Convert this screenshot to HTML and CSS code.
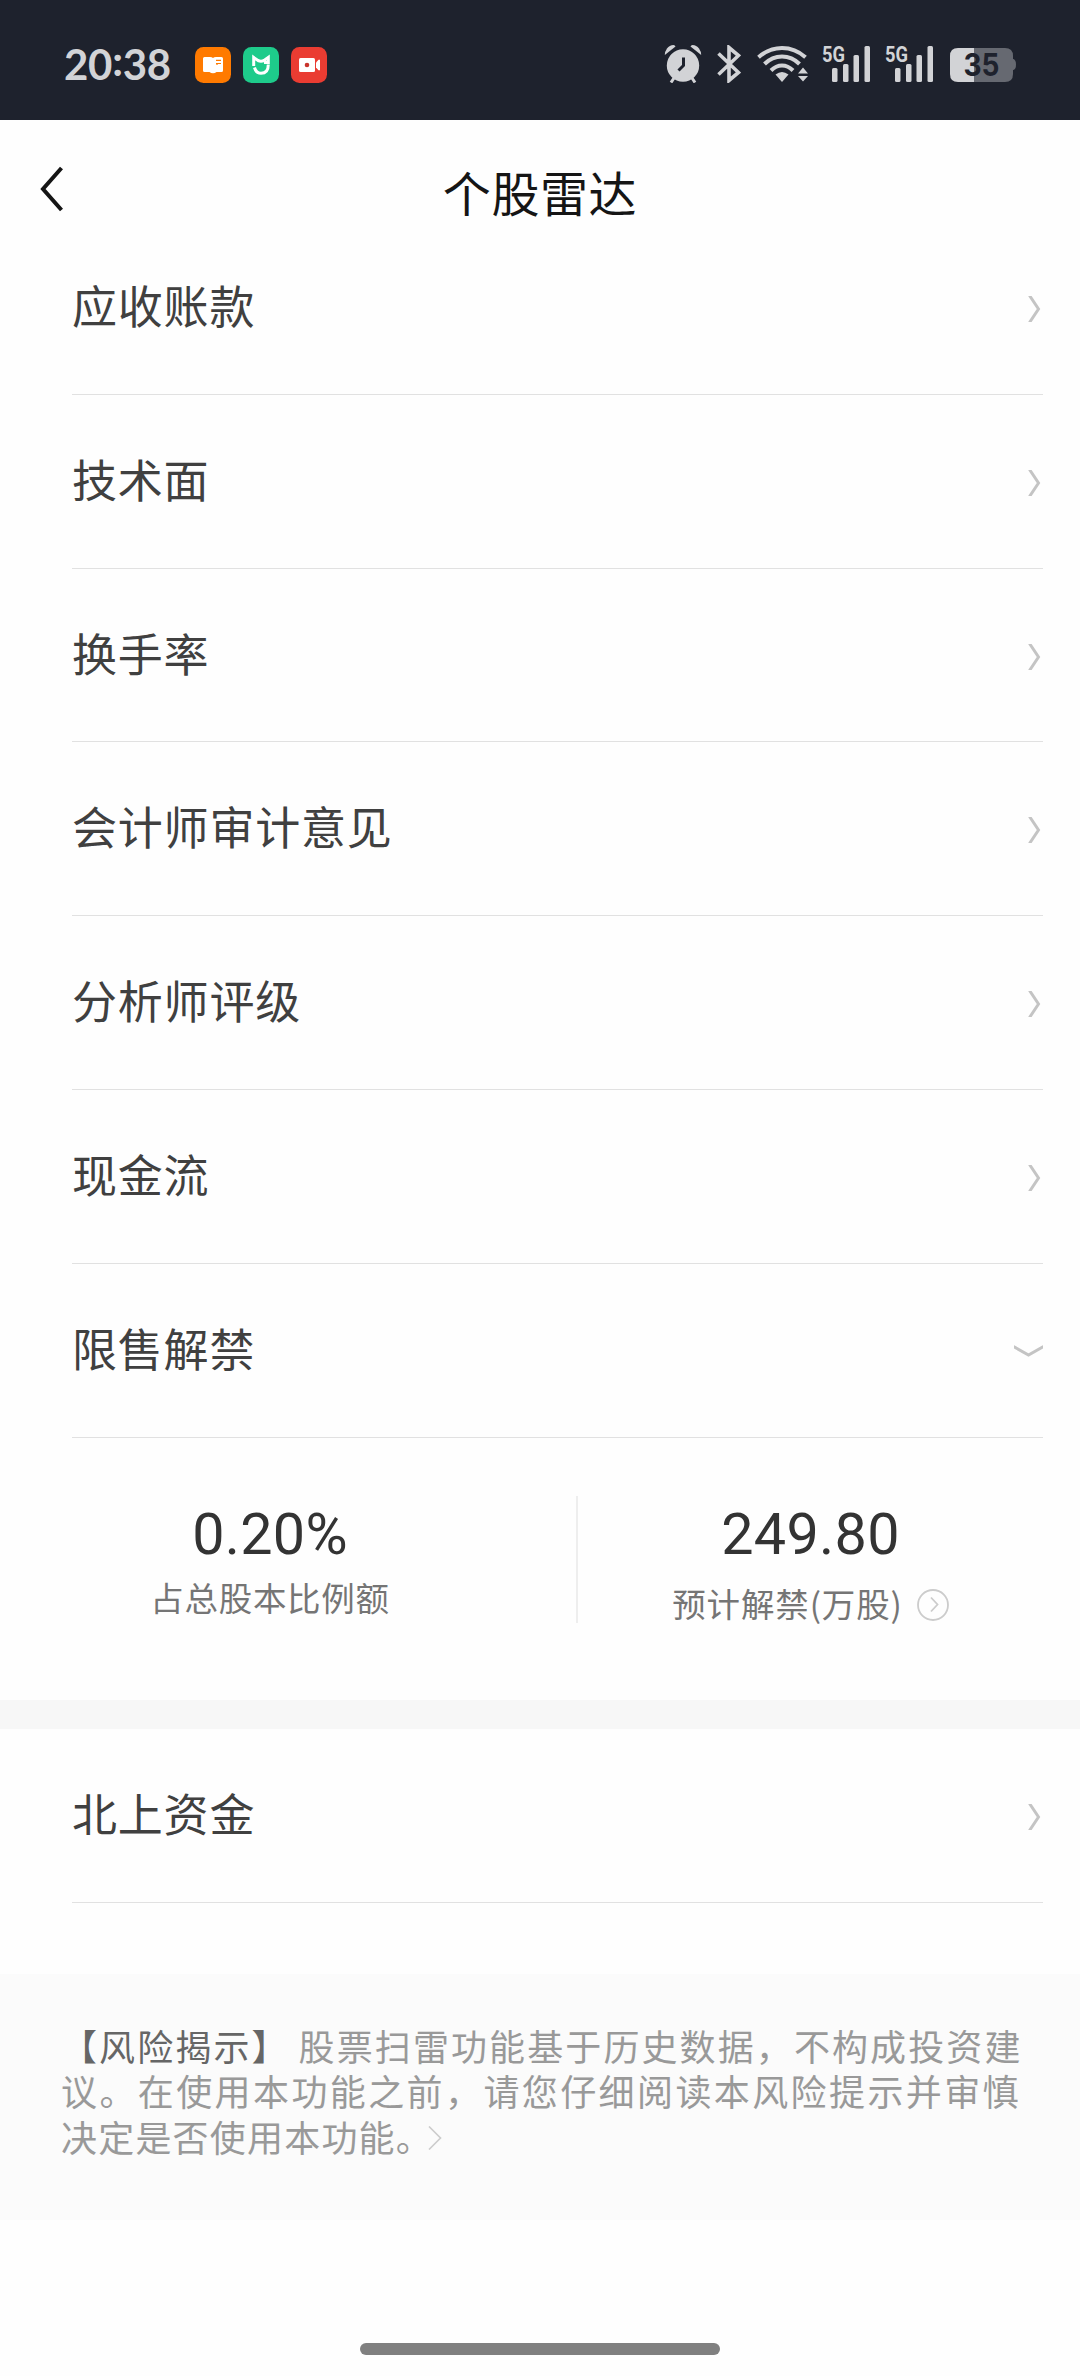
FILE: index.html
```html
<!DOCTYPE html>
<html lang="zh-CN">
<head>
<meta charset="utf-8">
<title>个股雷达</title>
<link rel="stylesheet" href="styles.css">
</head>
<body>
<div class="status">
  <div class="time">20<span class="colon">:</span>38</div>
  <div class="apps">
    <svg width="36" height="36" viewBox="0 0 36 36"><rect width="36" height="36" rx="8.5" fill="#ff7a00"/><path d="M8 11.5Q8 10 9.5 10H15Q17 10 18 11Q19 10 21 10H26.500Q28 10 28 11.500V23.500Q28 25 26.500 25H21.500Q20 26.200 18 26.200T14.500 25H9.500Q8 25 8 23.500Z" fill="#fff"/><path d="M21 13.300h5M21 16.500h5M22 16.500v1.500" stroke="#ff7a00" stroke-width="1.200"/></svg>
    <svg width="36" height="36" viewBox="0 0 36 36"><rect width="36" height="36" rx="8.500" fill="#1ecb8b"/><path d="M10.700 19V10.500L15 13.500Q18 14.800 21 13.500L25.300 10.500V15.500H21M11.500 20.500Q13 26.300 18 26.300Q25.300 26.300 25.300 17.500" fill="none" stroke="#fff" stroke-width="3"/></svg>
    <svg width="36" height="36" viewBox="0 0 36 36"><rect width="36" height="36" rx="8.500" fill="#ea3c32"/><rect x="8" y="11" width="16" height="14" rx="1.500" fill="#fff"/><circle cx="16" cy="18" r="2.300" fill="#c9352c"/><path d="M25 15.500L27.500 12.800H29V23.200H27.500L25 20.500Z" fill="#fff"/></svg>
  </div>
  <div class="indicators">
    <svg width="38" height="38" viewBox="0 0 38 38"><g fill="#d2d3d6"><path d="M.8 10Q.5 7 3 3.500T9.500 0Q11 .2 11.500 1.500Z"/><path d="M37.200 10Q37.500 7 35 3.500T28.500 0Q27 .2 26.500 1.500Z"/><circle cx="19" cy="20.500" r="16.200"/></g><path d="M10 33L7 37.500M28 33L31 37.500" stroke="#d2d3d6" stroke-width="3"/><path d="M19.500 12.500V20.500L14.500 25.500" fill="none" stroke="#1e222d" stroke-width="3"/></svg>
    <svg class="bt" width="24" height="38" viewBox="0 0 24 38"><path d="M1.500 8.500L21.500 27.500L12 35.500V2.500L21.500 10.500L1.500 29.500" fill="none" stroke="#d2d3d6" stroke-width="3.600"/></svg>
    <svg class="wifi" width="52" height="38" viewBox="0 0 52 38"><g fill="none" stroke="#d2d3d6" stroke-width="4"><path d="M1.500 12.200Q12 3 25 3T48.500 12.200"/><path d="M7.500 19Q15 11.500 25 11.500T42.500 19"/><path d="M14 25.500Q19 20.500 25 20.500T36 25.500"/></g><path d="M18.500 29.500Q25 24.500 31.500 29.500L25 37Z" fill="#d2d3d6"/><path d="M46 22.500L51 28.500H41ZM46 36.500L51 31H41Z" fill="#d2d3d6"/></svg>
    <svg class="cell" width="49" height="38" viewBox="0 0 49 38"><text x="0" y="16.500" class="net" textLength="23" lengthAdjust="spacingAndGlyphs">5G</text><g fill="#d2d3d6"><rect x="10" y="23" width="5.500" height="14" rx="1.500"/><rect x="21" y="19" width="5.500" height="18" rx="1.500"/><rect x="31.500" y="10" width="5.500" height="27" rx="1.500"/><rect x="42.500" y="1" width="5.500" height="36" rx="1.500"/></g></svg>
    <svg class="cell2" width="49" height="38" viewBox="0 0 49 38"><text x="0" y="16.500" class="net" textLength="23" lengthAdjust="spacingAndGlyphs">5G</text><g fill="#d2d3d6"><rect x="10" y="23" width="5.500" height="14" rx="1.500"/><rect x="21" y="19" width="5.500" height="18" rx="1.500"/><rect x="31.500" y="10" width="5.500" height="27" rx="1.500"/><rect x="42.500" y="1" width="5.500" height="36" rx="1.500"/></g></svg>
    <svg class="battery" width="66" height="38" viewBox="0 0 66 38"><path d="M62 14h1.500Q66 15 66 19.500T63.500 25H62Z" fill="#666971"/><path d="M24 3H55Q63 3 63 11V29Q63 37 55 37H24Z" fill="#666971"/><path d="M24 3H8Q0 3 0 11V29Q0 37 8 37H24Z" fill="#d2d3d6"/><text x="13.500" y="31" class="level" textLength="36" lengthAdjust="spacingAndGlyphs">35</text></svg>
  </div>
</div>
<header class="header">
  <svg class="back" width="24" height="48" viewBox="0 0 24 48"><path d="M21.500 3L3 24L21.500 45" fill="none" stroke="#151515" stroke-width="4"/></svg>
  <h1 class="title">个股雷达</h1>
</header>
<main>
  <ul class="list">
    <li class="row"><span class="label">应收账款</span><svg class="chev" width="15" height="26" viewBox="0 0 15 26"><path d="M1.500 -.5L10.500 13L1.500 26.500"/></svg></li>
    <li class="row"><span class="label">技术面</span><svg class="chev" width="15" height="26" viewBox="0 0 15 26"><path d="M1.500 -.5L10.500 13L1.500 26.500"/></svg></li>
    <li class="row"><span class="label">换手率</span><svg class="chev" width="15" height="26" viewBox="0 0 15 26"><path d="M1.500 -.5L10.500 13L1.500 26.500"/></svg></li>
    <li class="row"><span class="label">会计师审计意见</span><svg class="chev" width="15" height="26" viewBox="0 0 15 26"><path d="M1.500 -.5L10.500 13L1.500 26.500"/></svg></li>
    <li class="row"><span class="label">分析师评级</span><svg class="chev" width="15" height="26" viewBox="0 0 15 26"><path d="M1.500 -.5L10.500 13L1.500 26.500"/></svg></li>
    <li class="row"><span class="label">现金流</span><svg class="chev" width="15" height="26" viewBox="0 0 15 26"><path d="M1.500 -.5L10.500 13L1.500 26.500"/></svg></li>
    <li class="row"><span class="label">限售解禁</span><svg class="chev" width="29" height="13" viewBox="0 0 29 13"><path d="M-.5 1.500L14.500 10L29.500 1.500"/></svg></li>
  </ul>
  <section class="stats">
    <div class="stat"><div class="value">0.20%</div><div class="caption">占总股本比例额</div></div>
    <div class="divider"></div>
    <div class="stat"><div class="value">249.80</div><div class="caption with-icon"><span>预计解禁(万股)</span><svg class="more" width="32" height="32" viewBox="0 0 32 32" fill="none" stroke="#ccc" stroke-width="1.800"><circle cx="16" cy="16" r="15"/><path d="M14 8.500L20.500 15.500L14 22.500"/></svg></div></div>
  </section>
  <div class="band"></div>
  <ul class="list">
    <li class="row"><span class="label">北上资金</span><svg class="chev" width="15" height="26" viewBox="0 0 15 26"><path d="M1.500 -.5L10.500 13L1.500 26.500"/></svg></li>
  </ul>
</main>
<footer class="notice">
  <p class="line"><span class="strong">【风险揭示】</span><span>股票扫雷功能基于历史数据，不构成投资建</span></p>
  <p class="line second">议。在使用本功能之前，请您仔细阅读本风险提示并审慎</p>
  <p class="line third"><span>决定是否使用本功能。</span><svg class="next" width="14" height="24" viewBox="0 0 14 24"><path d="M1 .5L12.500 12L1 23.500" fill="none" stroke="#ccc" stroke-width="1.600"/></svg></p>
</footer>
<div class="home-bar"></div>
</body>
</html>
```
FILE: styles.css
```css
* { box-sizing: border-box; margin: 0; padding: 0; }
html { background: #fefefe; }
body {
  width: 1080px;
  height: 2376px;
  overflow: hidden;
  display: flex;
  flex-direction: column;
  background: #fefefe;
  font-family: "Noto Sans CJK SC", sans-serif;
  color: #404040;
}
svg { display: block; flex: none; }
.status {
  height: 120px;
  flex: none;
  background: #1e222d;
  display: flex;
  align-items: center;
  padding: 8px 64px 0;
}
.time {
  width: 131px;
  font: 700 42px/50px Lato, sans-serif;
  letter-spacing: -0.3px;
  color: #d2d3d6;
}
.colon { vertical-align: 4px; line-height: 1; }
.apps { display: flex; gap: 12px; padding-top: 2px; }
.indicators { display: flex; margin-left: auto; }
.bt { margin-left: 15px; }
.wifi { margin-left: 16px; }
.cell { margin-left: 13px; overflow: visible; }
.cell2 { margin-left: 14px; overflow: visible; }
.battery { margin-left: 16px; }
.net { font: 700 22px Roboto, sans-serif; fill: #d2d3d6; }
.level { font: 700 31px Inter, sans-serif; fill: #1e222d; }
.header {
  height: 101px;
  flex: none;
  display: grid;
  grid-template-columns: 40px 1fr 40px;
  padding-top: 44px;
}
.back { margin: 1px 0 0 40px; }
.title {
  text-align: center;
  font-size: 48px;
  font-weight: 400;
  line-height: 54px;
  letter-spacing: 0.6px;
  color: #151515;
}
.list { list-style: none; padding: 0 37px 0 72px; }
.row {
  height: 173.83px;
  display: flex;
  align-items: center;
  justify-content: space-between;
  border-bottom: 1px solid #e1e1e1;
}
.label {
  font-size: 45px;
  letter-spacing: 0.8px;
  line-height: 60px;
  padding-bottom: 5px;
}
.chev { fill: none; stroke: #c4c4c4; stroke-width: 3; margin-top: 3px; }
.stats {
  height: 262px;
  display: grid;
  grid-template-columns: 540px 1px 539px;
  padding-top: 58px;
}
.stat { display: flex; flex-direction: column; align-items: center; padding-top: 4px; }
.value { font: 400 57.500px/70px Roboto, sans-serif; color: #333; letter-spacing: 0.3px; }
.caption { font-size: 33.500px; letter-spacing: 0.7px; line-height: 50px; color: #757575; padding-top: 2px; }
.with-icon { display: flex; align-items: center; gap: 14px; padding-top: 8px; letter-spacing: 0.85px; }
.more { margin-top: 4px; }
.divider { width: 2px; height: 127px; background: #eee; margin-left: 36px; }
.band { height: 29px; background: #f7f7f7; }
.notice {
  height: 246px;
  flex: none;
  margin-top: 71px;
  padding: 49px 0 0 61px;
  background: #fbfbfb;
  color: #999;
  font-size: 36px;
  white-space: nowrap;
}
.line { display: flex; height: 45px; line-height: 45px; letter-spacing: 2.100px; }
.strong { color: #666; margin-right: 9px; }
.second { letter-spacing: 2.400px; }
.third { letter-spacing: 1.200px; align-items: center; padding-top: 1px; height: 46px; }
.next { margin: 4px 0 0 -5px; }
.home-bar {
  width: 360px;
  height: 12px;
  flex: none;
  border-radius: 6px;
  background: #808080;
  margin: 123px auto 0;
}
```
